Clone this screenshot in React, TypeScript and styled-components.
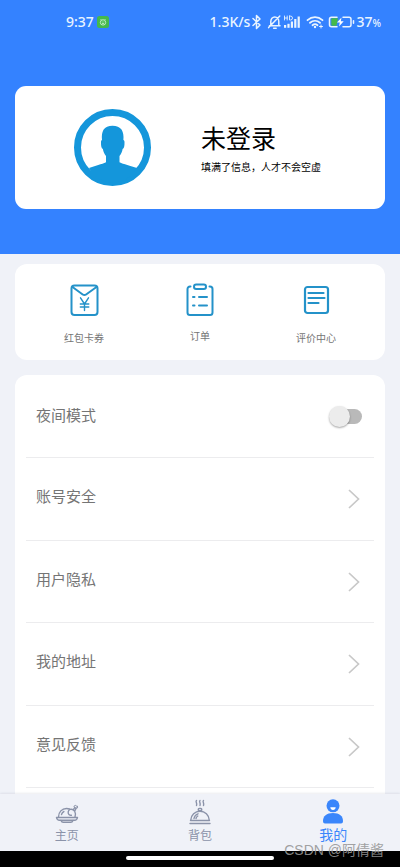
import React from "react";
import styled, { createGlobalStyle } from "styled-components";

const GlobalStyle = createGlobalStyle`
  *, *::before, *::after { box-sizing: border-box; }
  body {
    margin: 0;
    background: #f0f2f8;
    font-family: "Noto Sans", "Noto Sans CJK SC", sans-serif;
  }
`;

const Screen = styled.div`
  position: relative;
  display: flex;
  flex-direction: column;
  height: 100vh;
  overflow: hidden;
`;

const Content = styled.main`
  flex: 1;
  min-height: 0;
  overflow: hidden;
`;

const Hero = styled.header`
  padding: 0 15px 45px;
  background: #3482ff;
`;

const StatusBar = styled.div`
  display: flex;
  align-items: center;
  justify-content: space-between;
  height: 44px;
  margin-bottom: 42px;
  padding: 0 4px 0 51px;
  color: #e9f4ff;
  font-family: "Noto Sans", sans-serif;
  font-size: 14px;
  font-weight: 500;
  line-height: 20px;
`;

const StatusGroup = styled.div<{ $gap: number }>`
  display: flex;
  align-items: center;
  gap: ${(p) => p.$gap}px;
`;

const Percent = styled.span`
  font-size: 10px;
`;

const ProfileCard = styled.section`
  display: flex;
  align-items: center;
  gap: 50px;
  height: 123px;
  padding-left: 59px;
  border-radius: 11px;
  background: #fff;
`;

const ProfileName = styled.h1`
  margin: 0;
  color: #000;
  font-size: 25px;
  font-weight: 400;
  line-height: 36px;
`;

const ProfileNote = styled.p`
  margin: 3px 0 0;
  color: #000;
  font-size: 10px;
  line-height: 16px;
  white-space: nowrap;
`;

const ShortcutCard = styled.nav`
  display: grid;
  grid-template-columns: repeat(3, 1fr);
  height: 96px;
  margin: 10px 15px 15px;
  padding: 0 11px;
  border-radius: 12px;
  background: #fff;
`;

const Shortcut = styled.a<{ $gap: number }>`
  display: flex;
  flex-direction: column;
  align-items: center;
  gap: ${(p) => p.$gap}px;
  padding-top: 18px;
  color: #757575;
  font-size: 10px;
  line-height: 16px;
  text-decoration: none;
`;

const SettingsCard = styled.section`
  margin: 0 15px;
  padding: 0 11px;
  border-radius: 12px 12px 0 0;
  background: #fff;
`;

const settingRow = `
  display: flex;
  align-items: center;
  justify-content: space-between;
  height: 83px;
  border-bottom: 1px solid #ececee;
  color: #757575;
  font-size: 15px;
  line-height: 22px;

  &:nth-child(2n + 3) { height: 82px; }
`;

const SwitchRow = styled.label`
  ${settingRow}
  padding: 0 12px 0 10px;
`;

const LinkRow = styled.a`
  ${settingRow}
  padding: 0 14px 0 10px;
  text-decoration: none;
`;

const RowLabel = styled.span<{ $lift: number }>`
  padding-bottom: ${(p) => p.$lift}px;
`;

const Switch = styled.input`
  appearance: none;
  display: flex;
  align-items: center;
  width: 32px;
  height: 15px;
  margin: 0;
  border-radius: 8px;
  background: #b9b9b9;

  &::before {
    content: "";
    flex: none;
    width: 21px;
    height: 21px;
    margin-left: -1px;
    border-radius: 50%;
    background: #ececec;
    box-shadow: 0 1px 2px rgba(0, 0, 0, 0.35);
  }

  &:checked { justify-content: flex-end; background: #9cc3ff; }
`;

const TabBar = styled.nav`
  display: grid;
  grid-template-columns: repeat(3, 1fr);
  height: 57px;
  background: #f0f2f8;
  box-shadow: 0 -1px 2px rgba(60, 70, 100, 0.1);
`;

const Tab = styled.a<{ $active?: boolean }>`
  display: flex;
  flex-direction: column;
  align-items: center;
  justify-content: flex-end;
  gap: ${(p) => (p.$active ? 2 : 3)}px;
  padding-bottom: ${(p) => (p.$active ? 8 : 7)}px;
  color: ${(p) => (p.$active ? "#3a86fb" : "#8b93a9")};
  font-size: ${(p) => (p.$active ? 14 : 12)}px;
  line-height: 16px;
  text-decoration: none;
`;

const GestureBar = styled.div`
  display: flex;
  justify-content: center;
  height: 16px;
  padding-top: 5px;
  background: #000;

  &::before {
    content: "";
    width: 37%;
    height: 4px;
    border-radius: 2px;
    background: #fff;
  }
`;

const Watermark = styled.span`
  position: absolute;
  right: 16px;
  bottom: 10px;
  color: rgba(150, 150, 150, 0.9);
  font-family: "Liberation Sans", "Noto Sans CJK SC", sans-serif;
  font-size: 14px;
  line-height: 14px;
  white-space: nowrap;
`;

const ChargeBadge = () => (
  <svg width="12" height="12" viewBox="0 0 12 12" aria-hidden="true">
    <rect width="12" height="12" rx="2.5" fill="#45b94a" />
    <g fill="none" stroke="#c9efcd" strokeWidth="0.9">
      <circle cx="6" cy="6.4" r="2.7" />
      <path d="M3.6 3.2l1 1M8.4 3.2l-1 1M4.8 6h.8M6.5 6h.8M5 7.6h2" />
    </g>
  </svg>
);

const StatusIcons = () => (
  <svg width="106" height="18" viewBox="0 0 106 18" fill="none" stroke="#e9f4ff" strokeWidth="1.5" strokeLinecap="round" strokeLinejoin="round" aria-hidden="true">
    <path d="M3 5.500l7 6.500-3.500 3.500v-13L10 6l-7 6.500" />
    <path d="M19.500 12.800h10.500M20.800 12.600V8.500c0-2.600 1.700-4.500 4-4.500s4 1.900 4 4.500v4.100M23.600 15.200h2.600M18.600 14.600L29.800 3" />
    <g stroke="none" fill="#e9f4ff">
      <rect x="34" y="12" width="2.200" height="2.800" />
      <rect x="37.400" y="10.800" width="2.200" height="4" />
      <rect x="40.800" y="8.500" width="2.200" height="6.300" />
      <rect x="44.200" y="6" width="2.200" height="8.800" />
      <rect x="47.600" y="3.500" width="2.200" height="11.300" />
    </g>
    <path d="M34.500 3v4M37.200 3v4M34.500 5h2.700M39.500 3v4h1a2 2 0 0 0 0-4z" strokeWidth="0.900" />
    <path d="M57.500 7.200c4.500-4 10.500-4 15 0M60 9.800c3-2.600 7-2.600 10 0M62.500 12.200c1.500-1.300 3.500-1.300 5 0" strokeWidth="1.800" />
    <circle cx="65" cy="14" r="1.200" fill="#e9f4ff" stroke="none" />
    <path d="M69.500 13.500h3M71 12v3" strokeWidth="1" />
    <path d="M87 4.200h-5.500a2 2 0 0 0-2 2v5.600a2 2 0 0 0 2 2H87M93 4.200h6a2 2 0 0 1 2 2v5.600a2 2 0 0 1-2 2h-6" />
    <path d="M82.300 5.300H88l-1.500 7.400h-4.200a1 1 0 0 1-1-1V6.300a1 1 0 0 1 1-1z" fill="#45b94a" stroke="none" />
    <path d="M91.500 4.500L87 9.600h2.800l-.8 4L93.700 8.300h-2.900z" fill="#fff" stroke="none" />
    <path d="M103.500 7.700v2.600" />
  </svg>
);

const Avatar = () => (
  <svg width="77" height="77" viewBox="0 0 77 77" role="img" aria-label="头像">
    <circle cx="38.500" cy="38.500" r="35" fill="#fff" stroke="#1496db" strokeWidth="7" />
    <path
      fill="#1496db"
      d="M15 59c6-2.300 13-3.800 17-5.800V47c-1.600-2-2.700-4.300-3.100-7-1.500-.6-2-3-1.900-7 0-1 .3-1.800 1-2-.5-4 0-7.700 1.500-10.300C31.300 18 34.500 16.800 38.500 16.800s7.200 1.200 9.200 3.900c1.500 2.600 2.100 6.300 1.700 10.300.7.200 1.100 1 1.100 2 .1 4-.4 6.400-1.900 7-.4 2.700-1.500 5-3.100 7v6.200c4 2 11 3.500 17.500 5.800-5 9-14 14.500-24.500 14.500S20 68 15 59z"
    />
  </svg>
);

const CouponIcon = () => (
  <svg width="36" height="36" viewBox="0 0 36 36" fill="none" stroke="#2492c9" strokeWidth="2" strokeLinecap="round" strokeLinejoin="round" aria-hidden="true">
    <rect x="5.500" y="3.500" width="26" height="29.500" rx="3" />
    <path d="M6.500 5l10.200 7.500q1.700 1.200 3.400 0L30.500 5" />
    <path d="M14.500 15.800l4 6.200 4-6.200M18.500 22v6.500M14.300 22h8.500M14.300 25h8.500" strokeWidth="1.400" />
  </svg>
);

const OrderIcon = () => (
  <svg width="36" height="36" viewBox="0 0 36 36" fill="none" stroke="#2492c9" strokeWidth="2" strokeLinecap="round" strokeLinejoin="round" aria-hidden="true">
    <path d="M8.500 4.500H8a2.500 2.500 0 0 0-2.500 2.500v23.500A2.500 2.500 0 0 0 8 33h20a2.500 2.500 0 0 0 2.500-2.500V7A2.500 2.500 0 0 0 28 4.500h-.5" />
    <rect x="12" y="2.500" width="12" height="4.500" rx="2.200" />
    <path d="M11 15h1.500M17 15h8M11 23.500h1.500M17 23.500h8" />
  </svg>
);

const ReviewIcon = () => (
  <svg width="36" height="36" viewBox="0 0 36 36" fill="none" stroke="#2492c9" strokeWidth="2.200" strokeLinecap="round" strokeLinejoin="round" aria-hidden="true">
    <rect x="7" y="5" width="23" height="26" rx="2.500" />
    <path d="M10.500 11h15M10.500 16h16M10.500 21h10" />
  </svg>
);

const Chevron = () => (
  <svg width="12" height="20" viewBox="0 0 12 20" fill="none" stroke="#c8c8c8" strokeWidth="1.700" aria-hidden="true">
    <path d="M1 1l9.500 9L1 19" />
  </svg>
);

const HomeIcon = () => (
  <svg width="24" height="22" viewBox="0 0 24 22" fill="none" stroke="#8b93a9" strokeWidth="1.400" strokeLinecap="round" strokeLinejoin="round" aria-hidden="true">
    <path d="M1.500 14.500h21c-.3 1.700-1.500 2.800-3 2.800H4.500c-1.500 0-2.700-1.100-3-2.800z" />
    <path d="M6 17.500c.5 1.300 1.200 1.800 2.200 1.800h7.600c1 0 1.700-.5 2.200-1.800" />
    <path d="M3.500 14C3.500 9 7 5.500 11.500 5.500c1 0 2 .1 3 .5M6.500 11.500c.4-1.400 1.200-2.400 2.400-3" />
    <path d="M20 14c.8-2 .6-4-.3-5.800l1.400-3.100M19.700 8.200l-1.500-1.300c-2-1.500-4.700-.4-5 2-.3 2.200 1.200 3.500 3.200 3.300M18.200 6.900l1.500-2.300" />
    <path d="M19.700 4.600a1.100 1.100 0 1 1 1.400-1.500 1.100 1.100 0 1 1 0 2z" strokeWidth="1" />
  </svg>
);

const BagIcon = () => (
  <svg width="24" height="26" viewBox="0 0 24 26" fill="none" stroke="#8b93a9" strokeWidth="1.400" strokeLinecap="round" strokeLinejoin="round" aria-hidden="true">
    <path d="M2 24.500h20M2.500 21.500h19M2.700 21.300c.3-5.300 4.300-9 9.300-9s9 3.700 9.300 9" />
    <path d="M6 19.500c.4-2.400 1.900-4 4-4.700M8 19.500c.3-1.200.9-2 1.800-2.500" />
    <rect x="10.300" y="9.500" width="3.400" height="2.300" rx=".8" />
    <path d="M8.500 1.500c-1.500 1 1 2.200 0 5M12 1.500c-1.500 1 1 2.200 0 5M15.500 1.500c-1.500 1 1 2.200 0 5" />
  </svg>
);

const MineIcon = () => (
  <svg width="22" height="26" viewBox="0 0 22 26" aria-hidden="true">
    <circle cx="11" cy="6.800" r="6.500" fill="#3a86fb" />
    <path d="M1 22c0-5 3.500-8 10-8s10 3 10 8c0 1.700-.8 2.500-2 2.500H3c-1.200 0-2-.8-2-2.500z" fill="#3a86fb" />
    <path d="M8.300 8.200h5.400c-.2 1.800-1.200 2.700-2.700 2.700s-2.500-.9-2.700-2.700z" fill="#fff" />
  </svg>
);

const links = ["账号安全", "用户隐私", "我的地址", "意见反馈"];

export default function App() {
  return (
    <Screen>
      <GlobalStyle />
      <Content>
        <Hero>
          <StatusBar>
            <StatusGroup $gap={3}>
              <span>9:37</span>
              <ChargeBadge />
            </StatusGroup>
            <StatusGroup $gap={0}>
              <span>1.3K/s</span>
              <StatusIcons />
              <span>
                37<Percent>%</Percent>
              </span>
            </StatusGroup>
          </StatusBar>
          <ProfileCard>
            <Avatar />
            <div>
              <ProfileName>未登录</ProfileName>
              <ProfileNote>填满了信息，人才不会空虚</ProfileNote>
            </div>
          </ProfileCard>
        </Hero>
        <ShortcutCard aria-label="快捷入口">
          <Shortcut href="#coupons" $gap={12}>
            <CouponIcon />
            红包卡券
          </Shortcut>
          <Shortcut href="#orders" $gap={10}>
            <OrderIcon />
            订单
          </Shortcut>
          <Shortcut href="#reviews" $gap={12}>
            <ReviewIcon />
            评价中心
          </Shortcut>
        </ShortcutCard>
        <SettingsCard>
          <SwitchRow>
            <RowLabel $lift={2}>夜间模式</RowLabel>
            <Switch type="checkbox" role="switch" />
          </SwitchRow>
          {links.map((label) => (
            <LinkRow key={label} href="#settings">
              <RowLabel $lift={6}>{label}</RowLabel>
              <Chevron />
            </LinkRow>
          ))}
          <LinkRow as="div" />
        </SettingsCard>
      </Content>
      <TabBar aria-label="主导航">
        <Tab href="#home">
          <HomeIcon />
          主页
        </Tab>
        <Tab href="#bag">
          <BagIcon />
          背包
        </Tab>
        <Tab href="#mine" $active aria-current="page">
          <MineIcon />
          我的
        </Tab>
      </TabBar>
      <GestureBar />
      <Watermark>CSDN @阿倩酱</Watermark>
    </Screen>
  );
}
